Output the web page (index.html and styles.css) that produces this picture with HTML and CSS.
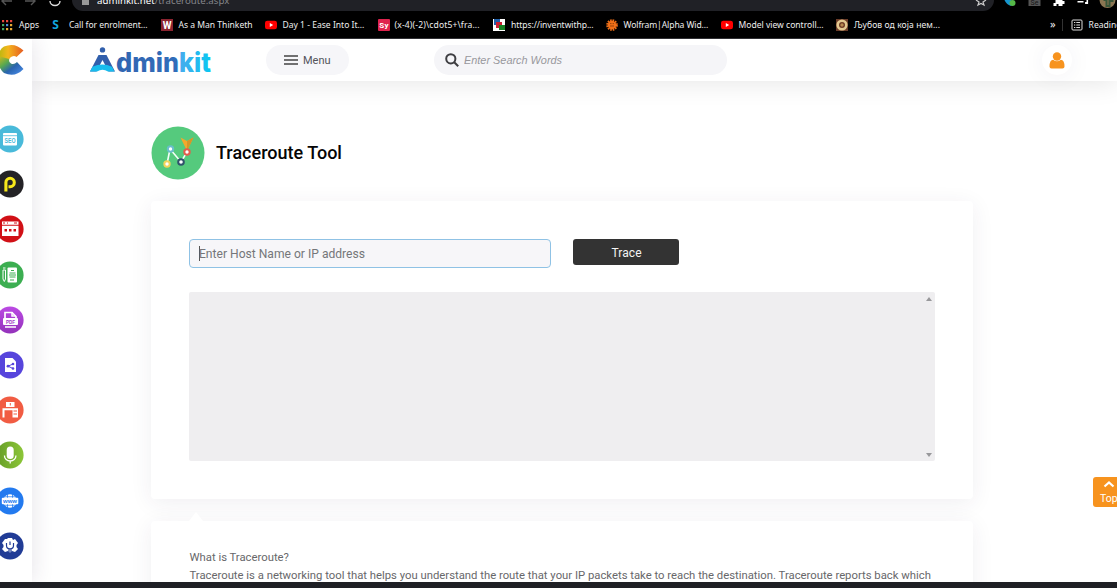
FILE: index.html
```html
<!DOCTYPE html>
<html lang="en">
<head>
<meta charset="utf-8">
<title>Traceroute Tool</title>
<link rel="stylesheet" href="styles.css">
</head>
<body>
<div class="chrome">
  <div class="address-row">
    <svg class="nav-icons" viewBox="0 0 72 11" fill="none" stroke-width="1.4"><path d="M12 1H2M6-3 2 1l4 4M25 1h10M31-3l4 4-4 4" stroke="#555"/><path d="M50 1a5 4.500 0 0 0 10 0" stroke="#ddd"/></svg>
    <div class="address"><svg class="lock" viewBox="0 0 8 8"><path d="M0 0h7v5H0z" fill="#999"/></svg><div class="url"><b>adminkit.net</b>/traceroute.aspx</div><svg class="star" viewBox="0 0 12 8"><path d="M1 0 4 2 3 5 6 3.500 9 5 8 2l3-2" fill="none" stroke="#ccc" stroke-width="1.200"/></svg></div>
    <svg class="extensions" viewBox="0 0 122 11"><path d="M10 0h7v6Q12 5 10 0" fill="#1695cf"/><circle cx="18" cy="3" r="3" fill="#55b848"/><path d="M34-3h12v9H34z" fill="#555"/><text x="36" y="5" font-size="7" fill="#161616">Se</text><path d="M59-2h9v3h2v3h-2v2h-4V4h-2v2h-3V3h2V0h-2z" fill="#fff"/><path d="M83 1h6v1.500h-6zM92-2h1.600v6h-3V2H92z" fill="#fff"/><circle cx="113" cy="0" r="8" fill="#8b7652"/><path d="M109 0h3v6h3V1h4" stroke="#385639" stroke-width="2" fill="none"/></svg>
  </div>
  <div class="bookmarks">
    <div class="bookmark b-apps"><svg viewBox="0 0 12 12"><g fill="#e9473e"><path d="M1 1h2.200v2.200H1zM5 1h2.200v2.200H5zM9 1h2.200v2.200H9z"/></g><path fill="#42a662" d="M1 5h2.200v2.200H1z"/><path fill="#4c89d8" d="M5 5h2.200v2.200H5z"/><path fill="#e8ab35" d="M9 5h2.200v2.200H9zM5 9h2.200v2.200H5zM9 9h2.200v2.200H9z"/><path fill="#42a662" d="M1 9h2.200v2.200H1z"/></svg><span>Apps</span></div>
    <div class="bookmark b-call"><svg viewBox="0 0 12 12"><text x="2.200" y="10.300" class="s-mark">S</text></svg><span>Call for enrolment...</span></div>
    <div class="bookmark b-man"><svg viewBox="0 0 12 12"><path fill="#8c2430" d="M0 0h12v12H0z"/><text x="6" y="10" class="w-mark">W</text></svg><span>As a Man Thinketh</span></div>
    <div class="bookmark b-day"><svg viewBox="0 0 12 12"><rect y="1.700" width="12" height="8.600" rx="2.400" fill="#f00"/><path d="m4.800 4 3.400 2-3.400 2z" fill="#fff"/></svg><span>Day 1 - Ease Into It...</span></div>
    <div class="bookmark b-sy"><svg viewBox="0 0 12 12"><rect width="12" height="12" rx="1" fill="#df234d"/><text x="6" y="8.800" class="sy-mark">Sy</text></svg><span>(x-4)(-2)\cdot5+\fra...</span></div>
    <div class="bookmark b-invent"><svg viewBox="0 0 12 12"><path fill="#fff" d="M0 0h12v12H0z"/><path fill="#2160a8" d="M1 0h6v6H1z"/><path fill="#c92031" d="M3 3h6v6H3z"/><path fill="#177f22" d="M6 6h6v5H6z"/></svg><span>https://inventwithp...</span></div>
    <div class="bookmark b-wolf"><svg viewBox="0 0 12 12"><circle cx="6" cy="6" r="4.700" fill="none" stroke="#f17018" stroke-width="2.200" stroke-dasharray="1.600 .86"/><circle cx="6" cy="6" r="4.200" fill="#f17018"/><path d="M4 4.600h1.500M6.600 4.600H8M4 7h4" stroke="#823a08" stroke-width=".8"/></svg><span>Wolfram|Alpha Wid...</span></div>
    <div class="bookmark b-model"><svg viewBox="0 0 12 12"><rect y="1.700" width="12" height="8.600" rx="2.400" fill="#f00"/><path d="m4.800 4 3.400 2-3.400 2z" fill="#fff"/></svg><span>Model view controll...</span></div>
    <div class="bookmark b-love"><svg viewBox="0 0 12 12"><path fill="#6b3c28" d="M0 0h12v12H0z"/><circle cx="6" cy="6" r="5.600" fill="#e3c88f"/><circle cx="6" cy="6" r="3" fill="#6f3b24"/><path d="m6 4 2 2-2 2-2-2z" fill="#b88a50"/></svg><span>Љубов од која нем...</span></div>
    <div class="more">»</div>
    <div class="bookmark reading"><svg viewBox="0 0 12 12" fill="none" stroke="#ddd"><rect x="1" y="1" width="10" height="10" rx="1"/><path d="M3 3.500h1.300M5.300 3.500H9M3 6h1.300M5.300 6H9M3 8.500h1.300M5.300 8.500H9"/></svg><span>Reading</span></div>
  </div>
</div>

<div class="page">
  <aside class="sidebar">
    <svg class="brand" viewBox="0 0 24 32"><defs><linearGradient id="c-top" x2="1" y2="0"><stop stop-color="#b5b80e"/><stop offset=".4" stop-color="#f4b51d"/><stop offset="1" stop-color="#e55b22"/></linearGradient><linearGradient id="c-low" x1="0" y1="0" x2="1" y2="1"><stop stop-color="#d8bd18"/><stop offset=".35" stop-color="#58a850"/><stop offset=".6" stop-color="#2964ae"/><stop offset="1" stop-color="#4e91f0"/></linearGradient></defs><path d="M23.500 6.500 16.500 13Q14.500 11.500 12 12.500 9 13.500 9 17L-2 17Q-2 6 4 2.500 15-2 23.500 6.500Z" fill="url(#c-top)"/><path d="M-2 12 9 15Q8.500 18 11 19.500 14 21 17 18L23.500 25Q15 34 4 29-3 23-2 12Z" fill="url(#c-low)"/></svg>
    <nav class="tools">
      <svg viewBox="0 0 28 28"><circle cx="14" cy="14" r="13.600" fill="#49bada"/><rect x="7" y="8" width="14" height="12.500" rx="1" fill="#fff"/><path d="M7 10.700h14" stroke="#49bada" stroke-width=".8"/><text x="14" y="18.300" textLength="11" lengthAdjust="spacingAndGlyphs" class="seo-mark">SEO</text></svg>
      <svg viewBox="0 0 28 28"><circle cx="14" cy="14" r="13.600" fill="#242326"/><path d="M9.900 21.500V12.500a4.200 4.200 0 1 1 4.200 4.200H12.500" fill="none" stroke="#f7e81b" stroke-width="3.100"/></svg>
      <svg viewBox="0 0 28 28"><circle cx="14" cy="14" r="13.600" fill="#d11016"/><path d="M6 6.500h16.500v3.200H6zM6 10.700h16.500V21H6z" fill="#fff"/><path d="M7 8h2m2 0h1m6 0h3" stroke="#d11016"/><path d="M8.500 14h2.500v2.500H8.500zm4.500 0h2.500v2.500H13zm4.500 0H20v2.500h-2.500z" fill="#d11016"/></svg>
      <svg viewBox="0 0 28 28"><circle cx="14" cy="14" r="13.600" fill="#3cae51"/><rect x="11.500" y="6.500" width="9.500" height="15" rx="1" fill="#fff"/><path d="M7 9h2.500v9l-1.200 2.500L7 18zM7 7h2.500" fill="none" stroke="#fff"/><path d="M15 9.500h3M13.500 12h6M13 14h7M13.500 16h6M14 19h4" stroke="#3cae51" stroke-width="1"/></svg>
      <svg viewBox="0 0 28 28"><defs><linearGradient id="pdf" x2="0" y2="1"><stop stop-color="#bc4ae4"/><stop offset="1" stop-color="#9332ba"/></linearGradient></defs><circle cx="14" cy="14" r="13.600" fill="url(#pdf)"/><path d="M9 12V6.500h7l4 4V12" fill="none" stroke="#fff" stroke-width="1.700"/><path d="M16 6v4h4M9 21h11" fill="none" stroke="#fff" stroke-width="1.500"/><rect x="7" y="12" width="15" height="7" rx="1" fill="#fff"/><text x="14.500" y="17.600" textLength="9" lengthAdjust="spacingAndGlyphs" class="pdf-mark">PDF</text></svg>
      <svg viewBox="0 0 28 28"><circle cx="14" cy="14" r="13.600" fill="#5745dc"/><path d="M9 7h7.500L20 10.500V21H9z" fill="#fff"/><path d="m17 13-5 2.200 5 2.300" fill="none" stroke="#5745dc"/><g fill="#5745dc"><circle cx="12" cy="15.200" r="1.400"/><circle cx="17" cy="13" r="1.300"/><circle cx="17" cy="17.500" r="1.300"/></g></svg>
      <svg viewBox="0 0 28 28"><circle cx="14" cy="14" r="13.600" fill="#f15c43"/><path d="M10 6h8.500v5H10zM6.500 12.300H22v9.200h-5.500v-7.200H8.500v7.200h-2z" fill="#fff"/><path d="M14.300 7v2.500M17.500 15h3.500m-3.500 3h3.500" stroke="#f15c43"/></svg>
      <svg viewBox="0 0 28 28"><defs><linearGradient id="mic" x2="1" y2="0"><stop stop-color="#669d28"/><stop offset="1" stop-color="#8cc638"/></linearGradient></defs><circle cx="14" cy="14" r="13.600" fill="url(#mic)"/><rect x="10.700" y="5.500" width="7" height="12.500" rx="3.500" fill="#fff"/><path d="M8.500 14.500v.5a5.700 5 0 0 0 11.400 0v-.5M14.200 20v2.500" fill="none" stroke="#fff" stroke-width="1.300"/></svg>
      <svg viewBox="0 0 28 28"><circle cx="14" cy="14" r="13.600" fill="#237aef"/><circle cx="14" cy="14" r="6.800" fill="#fff"/><path d="M8 9.800h12M8 18.200h12M11.500 7v14M16.500 7v14" stroke="#237aef" stroke-width=".8"/><rect x="5.800" y="10.700" width="16.500" height="6.600" rx="1" fill="#fff"/><text x="14" y="15.800" textLength="14" lengthAdjust="spacingAndGlyphs" class="www-mark">www</text></svg>
      <svg viewBox="0 0 28 28"><circle cx="14" cy="14" r="13.600" fill="#213c96"/><path d="m11 7 1-1h4l1 2 2-1 3 4-1.500 2v2l1.500 2-3 3-3-1-2 2-2-2-3 1-3-3 1.500-2v-2L6 11l3-4z" fill="#fff"/><path d="M10.500 11v2.500a3.500 3.300 0 0 0 7 0V11M14 9.500v3.500M13 17v5M15 17v5" fill="none" stroke="#213c96" stroke-width="1.200"/></svg>
    </nav>
  </aside>
  <div class="content">
    <header class="header">
      <svg class="logo" viewBox="0 0 122 28"><defs><linearGradient id="logo-color" gradientUnits="userSpaceOnUse" x1="27" x2="122"><stop stop-color="#3265b1"/><stop offset=".63" stop-color="#306dba"/><stop offset=".64" stop-color="#4ba9ed"/><stop offset="1" stop-color="#06c8f1"/></linearGradient></defs><path d="M0 25.500 8.500 9h8l8.500 16.500h-6.500L12.500 14l-6 11.500Z" fill="#315fac"/><path d="M0 25.500 2.500 20.800Q12.500 16 22 20.800l2.500 4.700H18q-5.500-3.500-11 0Z" fill="#18bced"/><circle cx="12.500" cy="3.900" r="2.700" fill="#315fac"/><text x="26" y="25.500" textLength="95" lengthAdjust="spacingAndGlyphs" class="logo-text" fill="url(#logo-color)">dminkit</text></svg>
      <button class="menu"><svg viewBox="0 0 14 10"><path d="M0 1h14M0 5h14M0 9h14" stroke="#444" stroke-width="1.500"/></svg>Menu</button>
      <label class="search"><svg viewBox="0 0 14 14" fill="none" stroke="#3e3e42" stroke-width="2"><circle cx="5.800" cy="5.800" r="4.600"/><path d="m9.200 9.200 4 4"/></svg><input placeholder="Enter Search Words"></label>
      <div class="user"><svg viewBox="0 0 16 17" fill="#f7931e"><circle cx="8" cy="4.500" r="4.200"/><path d="M4.200 7.700Q8 10.800 11.800 7.700 15.500 8 15.500 14.500q0 2-2 2h-11q-2 0-2-2Q.5 8 4.200 7.700Z"/></svg></div>
    </header>
    <main class="main">
      <div class="title"><svg viewBox="0 0 54 54"><circle cx="27" cy="27" r="26.500" fill="#55ca7d"/><path d="m29.500 11.500 6.500 3.500 6.500-3.500L36 25Z" fill="#f3a82b"/><path d="m36 15 6.500-3.500L36 25Z" fill="#d4962a"/><path d="m16 38 3-15 11 13 6-10" fill="none" stroke="#f5fff9" stroke-width="1.600"/><g fill="#fff" stroke-width="2"><circle cx="16" cy="38" r="2.700" stroke="#f2d45b"/><circle cx="19.500" cy="23" r="2.700" stroke="#69becb"/><circle cx="30" cy="36" r="2.800" stroke="#30526b"/><circle cx="36" cy="26" r="2.700" stroke="#e45d4c"/></g></svg><h1>Traceroute Tool</h1></div>
      <section class="card tool-card">
        <div class="form-row"><div class="host"><i class="caret"></i>Enter Host Name or IP address</div><button class="trace">Trace</button></div>
        <div class="output"><svg viewBox="0 0 6 4"><path d="m3 0 3 4H0z"/></svg><svg viewBox="0 0 6 4"><path d="M0 0h6L3 4z"/></svg></div>
      </section>
      <section class="card info-card"><h2>What is Traceroute?</h2><p>Traceroute is a networking tool that helps you understand the route that your IP packets take to reach the destination. Traceroute reports back which</p></section>
    </main>
  </div>
  <button class="top"><svg viewBox="0 0 12 8"><path d="m1.500 6.500 4.500-4 4.500 4" fill="none" stroke="#fff" stroke-width="2.200"/></svg><span>Top</span></button>
</div>
<div class="taskbar"></div>
</body>
</html>
```
FILE: styles.css
```css
* { box-sizing: border-box; }
body { margin: 0; width: 1117px; height: 588px; overflow: hidden; display: flex; flex-direction: column; font-family: Roboto, sans-serif; background: #fff; }
svg { display: block; flex: none; }
button { border: 0; font-family: inherit; padding: 0; }

.chrome { height: 39px; background: #000; flex: none; overflow: hidden; font-family: "Noto Sans", sans-serif; border-bottom: 1px solid #303034; }
.address-row { height: 11px; display: flex; overflow: hidden; }
.nav-icons { width: 72px; height: 11px; }
.address { width: 922px; height: 11px; background: #202126; border-radius: 0 0 12px 12px; display: flex; align-items: flex-start; padding: 0 7px 0 10px; }
.lock { width: 8px; height: 8px; }
.url { margin: -6px 0 0 7px; flex: 1; font-size: 9.7px; line-height: 14px; color: #85868a; white-space: nowrap; }
.url b { font-weight: 400; color: #fff; }
.star { width: 12px; height: 8px; }
.extensions { width: 123px; height: 11px; font-family: Roboto, sans-serif; }
.bookmarks { display: flex; height: 27px; align-items: center; padding-left: 1px; }
.bookmark { display: flex; align-items: center; gap: 6px; flex: none; color: #eee; font-size: 8.55px; line-height: 12px; white-space: nowrap; }
.bookmark svg { width: 12px; height: 12px; }
.b-apps { width: 49px; }
.b-call { width: 110.5px; gap: 7px; letter-spacing: -.05px; }
.b-man { width: 104px; }
.b-day { width: 113px; }
.b-sy { width: 115.5px; gap: 5px; letter-spacing: .15px; }
.b-invent { width: 112.5px; letter-spacing: -.06px; }
.b-wolf { width: 115px; letter-spacing: -.09px; }
.b-model { width: 115.5px; }
.b-love { width: 214px; letter-spacing: .08px; }
.more { width: 14px; color: #eee; font-size: 11px; line-height: 12px; margin-top: -2px; }
.reading { border-left: 1px solid #333; padding-left: 8px; width: 60px; margin-left: 6px; }
.s-mark { font: 700 12px "Open Sans", sans-serif; fill: #12a7df; }
.w-mark { font: 700 10px Roboto, sans-serif; fill: #fff; text-anchor: middle; }
.sy-mark { font: 700 8px Roboto, sans-serif; fill: #fff; text-anchor: middle; }

.page { height: 543px; display: flex; position: relative; overflow: hidden; flex: none; }
.sidebar { width: 32px; flex: none; z-index: 2; background: #fff; box-shadow: 3px 0 20px rgba(60,50,85,.11); padding-top: 5px; }
.brand { width: 24px; height: 32px; }
.tools { margin: 49px 0 0 -4px; display: flex; flex-direction: column; gap: 17.2px; }
.tools svg { width: 28px; height: 28px; }
.seo-mark { font: 700 7px "Liberation Sans", sans-serif; fill: #49bada; text-anchor: middle; }
.pdf-mark { font: 700 5.8px "Liberation Sans", sans-serif; fill: #9d37c5; text-anchor: middle; }
.www-mark { font: 700 6px "Liberation Sans", sans-serif; fill: #237aef; text-anchor: middle; }
.content { flex: 1; min-width: 0; }
.header { height: 42px; display: flex; align-items: center; background: #fff; padding-left: 58px; box-shadow: 0 2px 26px rgba(0,0,0,.1); position: relative; z-index: 1; }
.logo { width: 122px; height: 28px; margin-top: -1px; }
.logo-text { font: 800 26.5px Inter, sans-serif; }
.menu { margin-left: 54px; width: 83px; height: 30px; border-radius: 15px; background: #f6f6f9; display: flex; align-items: center; gap: 5px; padding-left: 18px; color: #54545a; font-size: 11px; }
.menu svg { width: 14px; height: 10px; }
.search { margin-left: 85px; width: 293px; height: 30px; border-radius: 15px; background: #f5f5f8; display: flex; align-items: center; gap: 5px; padding-left: 11px; }
.search svg { width: 14px; height: 14px; }
.search input { border: 0; outline: 0; padding: 0; width: 230px; background: none; font: italic 10.9px "Liberation Sans", sans-serif; }
.search input::placeholder { color: #98989d; opacity: 1; }
.user { margin-left: 315px; width: 30px; height: 30px; border-radius: 50%; background: #fff; display: flex; align-items: center; justify-content: center; box-shadow: 0 2px 25px rgba(50,30,90,.06); }
.user svg { width: 16px; height: 17px; }
.main { padding: 45px 0 0 119px; width: 941px; }
.title { display: flex; align-items: center; gap: 11px; height: 54px; }
.title svg { width: 54px; height: 54px; }
.title h1 { margin: 0; font-size: 18px; font-weight: 500; color: #050505; line-height: 24px; }
.card { background: #fff; width: 822px; border-radius: 4px; box-shadow: 0 4px 22px rgba(50,40,80,.075); }
.tool-card { height: 298px; margin-top: 21px; padding: 38px; }
.form-row { display: flex; gap: 22px; align-items: flex-start; }
.host { width: 362px; height: 29px; border: 1px solid #8fc2e5; border-radius: 4px; background: #f7f6f9; padding-left: 9px; color: #75767a; font-size: 12.1px; display: flex; align-items: center; white-space: nowrap; }
.caret { width: 1px; height: 15px; background: #555; margin-right: -1px; }
.trace { width: 106px; height: 26px; background: #333; color: #f4f4f4; border-radius: 3px; font-size: 12px; letter-spacing: .1px; padding: 1px 0 0 1px; }
.output { width: 746px; height: 169px; margin-top: 24px; background: #efeef0; border-radius: 2px; padding: 5px 3px 4px; display: flex; flex-direction: column; align-items: flex-end; justify-content: space-between; }
.output svg { width: 6px; height: 4px; fill: #98989b; }
.info-card { height: 90px; margin-top: 22px; padding: 28px 38px 0 38.5px; color: #67676a; position: relative; }
.info-card::before { content: ""; position: absolute; left: 38px; top: -9px; border: 7px solid transparent; border-top: 0; border-bottom: 9px solid #fff; }
.info-card h2, .info-card p { margin: 0; font-size: 11.31px; line-height: 18px; font-weight: 400; white-space: nowrap; }
.top { position: absolute; right: -4px; top: 438px; width: 28px; height: 30px; border-radius: 3px; background: #f7931e; color: #fff; display: flex; flex-direction: column; align-items: flex-start; padding: 3px 0 0 7px; font-size: 10.5px; }
.top svg { width: 12px; height: 8px; margin-left: 3px; }
.top span { line-height: 14px; margin-top: 4px; }
.taskbar { height: 6px; flex: none; background: #1f2025; }
```
